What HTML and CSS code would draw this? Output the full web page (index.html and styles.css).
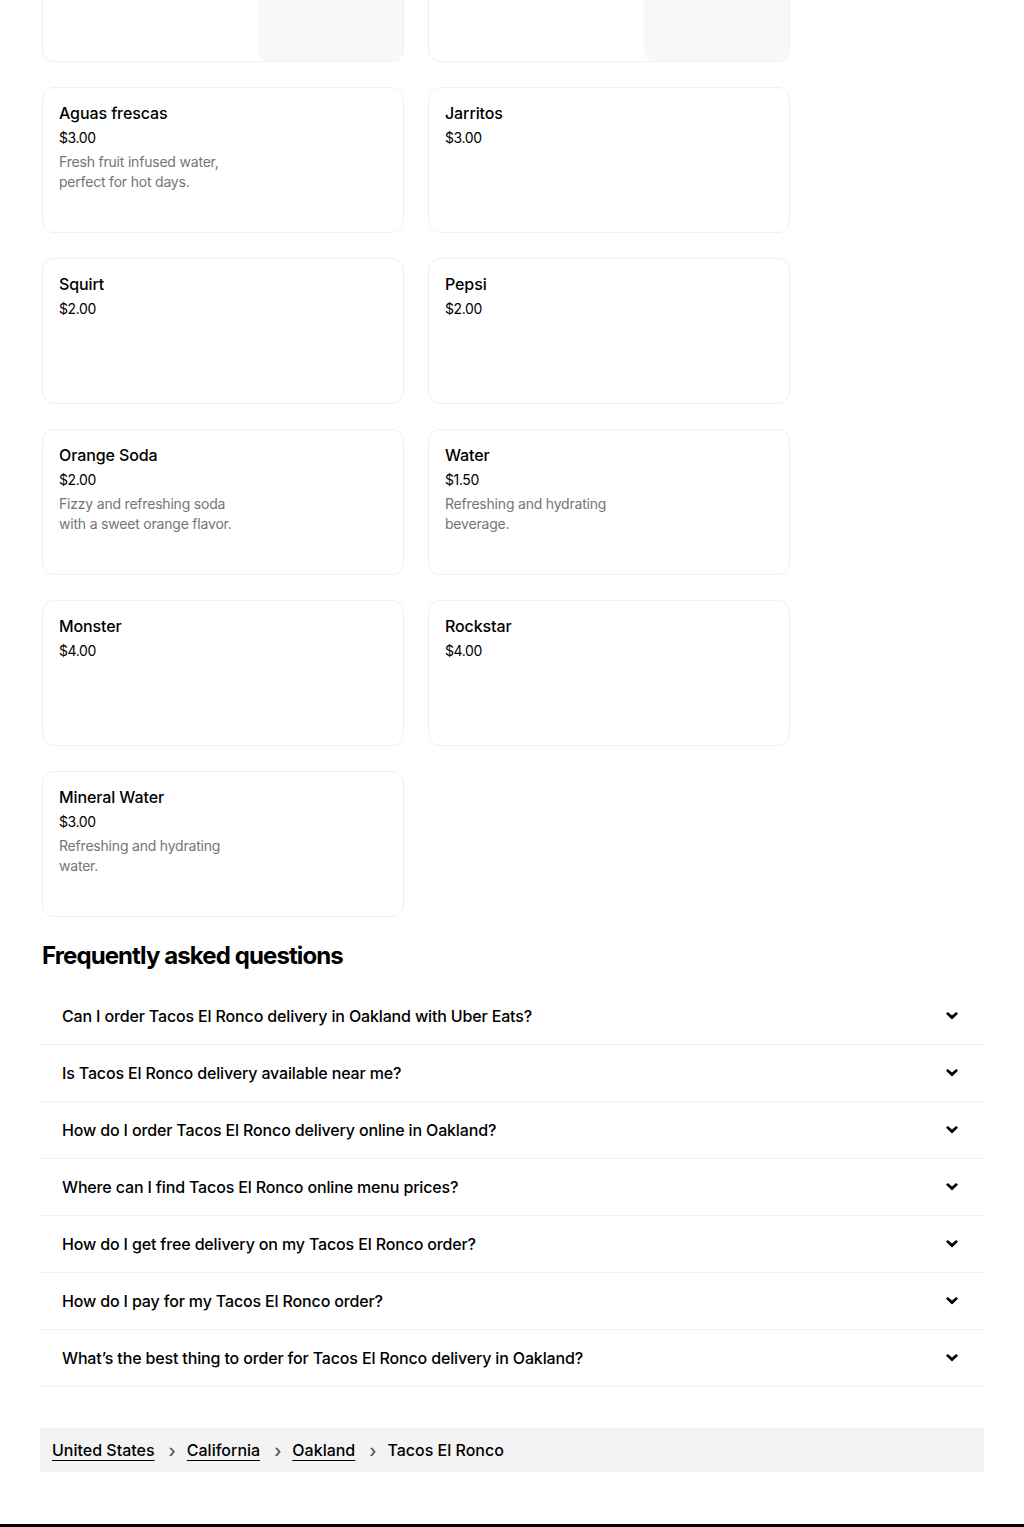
FILE: index.html
```html
<!DOCTYPE html>
<html lang="en">
<head>
<meta charset="utf-8">
<title>Tacos El Ronco</title>
<link rel="stylesheet" href="styles.css">
</head>
<body>
<main class="page">
  <section class="menu-grid">
    <div class="card has-img"><div class="card-text"></div><div class="card-img"></div></div>
    <div class="card has-img"><div class="card-text"></div><div class="card-img"></div></div>
    <div class="card"><div class="card-text"><div class="title">Aguas frescas</div><div class="price">$3.00</div><div class="desc">Fresh fruit infused water, perfect for hot days.</div></div></div>
    <div class="card"><div class="card-text"><div class="title">Jarritos</div><div class="price">$3.00</div></div></div>
    <div class="card"><div class="card-text"><div class="title">Squirt</div><div class="price">$2.00</div></div></div>
    <div class="card"><div class="card-text"><div class="title">Pepsi</div><div class="price">$2.00</div></div></div>
    <div class="card"><div class="card-text"><div class="title">Orange Soda</div><div class="price">$2.00</div><div class="desc">Fizzy and refreshing soda with a sweet orange flavor.</div></div></div>
    <div class="card"><div class="card-text"><div class="title">Water</div><div class="price">$1.50</div><div class="desc">Refreshing and hydrating beverage.</div></div></div>
    <div class="card"><div class="card-text"><div class="title">Monster</div><div class="price">$4.00</div></div></div>
    <div class="card"><div class="card-text"><div class="title">Rockstar</div><div class="price">$4.00</div></div></div>
    <div class="card"><div class="card-text"><div class="title">Mineral Water</div><div class="price">$3.00</div><div class="desc">Refreshing and hydrating water.</div></div></div>
  </section>

  <section class="faq">
    <h2 class="faq-heading">Frequently asked questions</h2>
    <ul class="faq-list">
      <li class="faq-row"><span>Can I order Tacos El Ronco delivery in Oakland with Uber Eats?</span><svg class="chev" viewBox="0 0 12 8" width="12" height="8"><path d="M0 1.8 1.8 0 6 3.6 10.2 0 12 1.8 6 7.6Z"/></svg></li>
      <li class="faq-row"><span>Is Tacos El Ronco delivery available near me?</span><svg class="chev" viewBox="0 0 12 8" width="12" height="8"><path d="M0 1.8 1.8 0 6 3.6 10.2 0 12 1.8 6 7.6Z"/></svg></li>
      <li class="faq-row"><span>How do I order Tacos El Ronco delivery online in Oakland?</span><svg class="chev" viewBox="0 0 12 8" width="12" height="8"><path d="M0 1.8 1.8 0 6 3.6 10.2 0 12 1.8 6 7.6Z"/></svg></li>
      <li class="faq-row"><span>Where can I find Tacos El Ronco online menu prices?</span><svg class="chev" viewBox="0 0 12 8" width="12" height="8"><path d="M0 1.8 1.8 0 6 3.6 10.2 0 12 1.8 6 7.6Z"/></svg></li>
      <li class="faq-row"><span>How do I get free delivery on my Tacos El Ronco order?</span><svg class="chev" viewBox="0 0 12 8" width="12" height="8"><path d="M0 1.8 1.8 0 6 3.6 10.2 0 12 1.8 6 7.6Z"/></svg></li>
      <li class="faq-row"><span>How do I pay for my Tacos El Ronco order?</span><svg class="chev" viewBox="0 0 12 8" width="12" height="8"><path d="M0 1.8 1.8 0 6 3.6 10.2 0 12 1.8 6 7.6Z"/></svg></li>
      <li class="faq-row"><span>What’s the best thing to order for Tacos El Ronco delivery in Oakland?</span><svg class="chev" viewBox="0 0 12 8" width="12" height="8"><path d="M0 1.8 1.8 0 6 3.6 10.2 0 12 1.8 6 7.6Z"/></svg></li>
    </ul>
  </section>

  <nav class="crumbs">
    <a href="#">United States</a><span class="sep">›</span>
    <a href="#">California</a><span class="sep">›</span>
    <a href="#">Oakland</a><span class="sep">›</span>
    <span class="current">Tacos El Ronco</span>
  </nav>
</main>
<footer class="footer-bar"></footer>
</body>
</html>
```

FILE: styles.css
```css
* { box-sizing: border-box; }
html, body { margin: 0; padding: 0; background: #fff; }
body {
  font-family: Inter, "Liberation Sans", Arial, sans-serif;
  color: #000;
  overflow: hidden;
}
.page {
  padding: 0 40px;
  margin-top: -84px;
}
.menu-grid {
  display: grid;
  grid-template-columns: 362px 362px;
  column-gap: 24px;
  row-gap: 25px;
  padding-left: 2px;
}
.card {
  height: 146px;
  border: 1px solid #f0f0f0;
  border-radius: 12px;
  display: flex;
  overflow: hidden;
}
.card-text {
  flex: 1;
  padding: 14px 16px 16px 16px;
}
.card-img {
  width: 145px;
  height: 144px;
  background: #f8f8f8;
  border-radius: 0 10px 10px 10px;
}
.title {
  font-size: 16px;
  font-weight: 500;
  line-height: 22px;
  letter-spacing: -0.1px;
  color: #000;
}
.price {
  margin-top: 5px;
  font-size: 14px;
  line-height: 18px;
  letter-spacing: -0.4px;
  color: #000;
}
.desc {
  margin-top: 5px;
  font-size: 14px;
  line-height: 20px;
  color: #757575;
  max-width: 180px;
  letter-spacing: -0.2px;
}
.faq { padding-left: 1px; }
.faq-heading {
  margin: 23px 0 16px 1px;
  font-size: 24px;
  line-height: 32px;
  font-weight: 700;
  letter-spacing: -0.9px;
}
.faq-list { list-style: none; margin: 0; padding: 0; }
.faq-row {
  height: 57px;
  display: flex;
  align-items: center;
  justify-content: space-between;
  padding: 0 26px 0 21px;
  border-bottom: 1px solid #efefef;
  font-size: 16px;
  font-weight: 500;
  letter-spacing: -0.15px;
}
.chev { fill: #000; flex: none; }
.crumbs {
  margin-top: 41px;
  height: 44px;
  background: #f3f3f3;
  display: flex;
  align-items: center;
  padding: 0 12px;
  font-size: 16px;
  font-weight: 500;
  letter-spacing: 0;
}
.crumbs a {
  color: #000;
  text-decoration: underline;
  text-underline-offset: 4px;
}
.sep {
  margin: 0 11px 0 14px;
  color: #545454;
  font-size: 18px;
}
.current { color: #000; }
.footer-bar {
  margin-top: 52px;
  height: 40px;
  background: #000;
}
```
